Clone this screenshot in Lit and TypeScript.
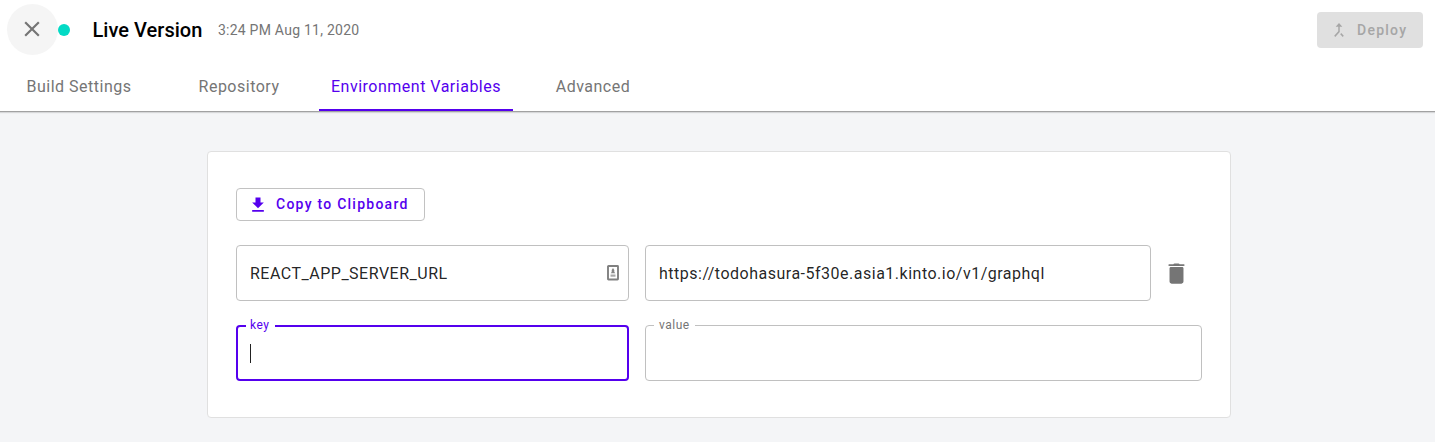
import { LitElement, html, css } from "lit";
import { customElement, state } from "lit/decorators.js";

@customElement("app-root")
export class AppRoot extends LitElement {
  static styles = css`
    :host {
      display: block;
      height: 442px;
      overflow: hidden;
      background: #f4f5f7;
      font-family: Roboto, "Liberation Sans", sans-serif;
      color: #000;
    }
    * { box-sizing: border-box; }
    svg { display: block; flex: none; }
    button { font: inherit; margin: 0; cursor: pointer; }
    .top {
      background: #fff;
      height: 112px;
      border-bottom: 1px solid #a1a1a2;
      box-shadow: 0 1px 1px rgba(0, 0, 0, 0.12);
    }
    .bar {
      display: flex;
      align-items: center;
      height: 60px;
      padding: 0 12px 0 7px;
    }
    .close {
      display: flex;
      align-items: center;
      justify-content: center;
      width: 51px;
      height: 51px;
      margin-top: -1px;
      padding: 0 1px 1px 0;
      border: 0;
      border-radius: 50%;
      background: #f5f5f5;
      color: #757575;
    }
    .dot {
      width: 12px;
      height: 12px;
      border-radius: 50%;
      background: #03dac5;
    }
    .title {
      margin: 0 0 0 22.5px;
      font-size: 20px;
      font-weight: 500;
      letter-spacing: 0.03px;
      line-height: 24px;
      white-space: nowrap;
    }
    .date {
      margin-left: 15.5px;
      font-size: 14px;
      letter-spacing: 0.25px;
      color: #757575;
      white-space: nowrap;
    }
    .deploy {
      display: flex;
      align-items: center;
      width: 106px;
      height: 36px;
      margin-left: auto;
      padding: 0 0 1px 13px;
      gap: 9px;
      border: 0;
      border-radius: 4px;
      background: #e0e0e0;
      color: #a6a6a6;
      font-size: 14px;
      font-weight: 500;
      letter-spacing: 1.25px;
    }
    .tabs { display: flex; height: 51px; margin-left: -1px; }
    .tab {
      width: 160px;
      padding: 3px 0 0;
      border: 0;
      border-bottom: 2px solid transparent;
      background: none;
      color: #757575;
      font-size: 16px;
      letter-spacing: 0.5px;
      white-space: nowrap;
    }
    .tab.active {
      width: 194px;
      color: #5500ee;
      border-bottom-color: #5500ee;
    }
    .card {
      width: 1024px;
      height: 267px;
      margin: 39px 0 0 207px;
      padding: 36px 28px 0;
      border: 1px solid #e0e0e0;
      border-radius: 4px;
      background: #fff;
    }
    .copy {
      display: flex;
      align-items: center;
      width: 189px;
      height: 33px;
      padding: 0 0 0 11px;
      gap: 8px;
      border: 1px solid #c2c2c2;
      border-radius: 4px;
      background: #fff;
      color: #5500ee;
      font-size: 14px;
      font-weight: 500;
      letter-spacing: 1.25px;
      white-space: nowrap;
    }
    .copy span { margin-bottom: 1px; }
    .row { display: flex; gap: 16px; margin-top: 24px; }
    .field {
      position: relative;
      display: flex;
      align-items: center;
      flex: 1;
      height: 56px;
      padding: 0 9px 0 13px;
      border: 1px solid #c0c0c0;
      border-radius: 4px;
      font-size: 16px;
      letter-spacing: 0.5px;
      color: rgba(0, 0, 0, 0.87);
      white-space: nowrap;
    }
    .field.key { flex: 0 0 393px; }
    .field.focused { border: 2px solid #5500ee; padding-left: 12px; }
    .text { flex: 1; }
    .label {
      position: absolute;
      top: -8px;
      left: 8px;
      padding: 0 5px;
      background: #fff;
      color: #757575;
      font-size: 12px;
      line-height: 14px;
      letter-spacing: 0.5px;
    }
    .focused .label { top: -9px; padding-left: 4px; padding-right: 6px; color: #5500ee; }
    .caret { width: 1px; height: 19px; background: #212121; }
    .remove {
      display: flex;
      align-items: center;
      justify-content: center;
      width: 51px;
      margin-left: -16px;
      padding: 0;
      border: 0;
      background: none;
      color: #757575;
    }
  `;

  @state() private active = 2;

  private tabs = ["Build Settings", "Repository", "Environment Variables", "Advanced"];

  render() {
    return html`
      <header class="top">
        <div class="bar">
          <button class="close" aria-label="Close">
            <svg width="26" height="26" viewBox="0 0 24 24" fill="currentColor">
              <path d="M19 6.41L17.59 5 12 10.59 6.41 5 5 6.41 10.59 12 5 17.59 6.41 19 12 13.41 17.59 19 19 17.59 13.41 12z" />
            </svg>
          </button>
          <span class="dot"></span>
          <h1 class="title">Live Version</h1>
          <span class="date">3:24 PM Aug 11, 2020</span>
          <button class="deploy" disabled>
            <svg width="18" height="20" viewBox="0 0 24 24" preserveAspectRatio="none" fill="currentColor">
              <path d="M17 20.41L18.41 19 15 15.59 13.59 17 17 20.41zM7.5 8H11v5.59L5.59 19 7 20.41l6-6V8h3.5L12 3.5 7.5 8z" />
            </svg>
            <span>Deploy</span>
          </button>
        </div>
        <nav class="tabs">
          ${this.tabs.map(
            (name, i) => html`<button
              class="tab ${i === this.active ? "active" : ""}"
              @click=${() => (this.active = i)}
            >${name}</button>`
          )}
        </nav>
      </header>
      <main class="card">
        <button class="copy">
          <svg width="20" height="20" viewBox="0 0 24 24" fill="currentColor">
            <path d="M19 9h-4V3H9v6H5l7 7 7-7zM5 18v2h14v-2H5z" />
          </svg>
          <span>Copy to Clipboard</span>
        </button>
        <div class="row">
          <div class="field key">
            <span class="text">REACT_APP_SERVER_URL</span>
            <svg width="12" height="16" viewBox="0 0 12 16">
              <rect x="1" y="1" width="10" height="13.5" rx="0.5" fill="#fff" stroke="#808080" stroke-width="1.9" />
              <path d="M6 3l1.3 2v2l1 1.3H3.7L4.7 7V5z" fill="#858585" />
              <path d="M3.5 9.5h5v2.2h-5z" fill="#a8a8a8" />
            </svg>
          </div>
          <div class="field">
            <span class="text">https://todohasura-5f30e.asia1.kinto.io/v1/graphql</span>
          </div>
          <button class="remove" aria-label="Delete">
            <svg width="27" height="27" viewBox="0 0 24 24" fill="currentColor">
              <path d="M5.8 7.4c0-.7.5-1.2 1.2-1.2h10c.7 0 1.2.5 1.2 1.2V19.2c0 1-.8 1.8-1.8 1.8H7.6c-1 0-1.8-.8-1.8-1.8zM9.2 3.7c.2-.5.6-.7 1-.7h3.6c.4 0 .8.2 1 .7h3.5c.5 0 .9.3.9.8s-.4.8-.9.8H5.7c-.5 0-.9-.3-.9-.8s.4-.8.9-.8z" />
            </svg>
          </button>
        </div>
        <div class="row">
          <div class="field key focused">
            <span class="label">key</span>
            <span class="caret"></span>
          </div>
          <div class="field">
            <span class="label">value</span>
          </div>
        </div>
      </main>
    `;
  }
}
